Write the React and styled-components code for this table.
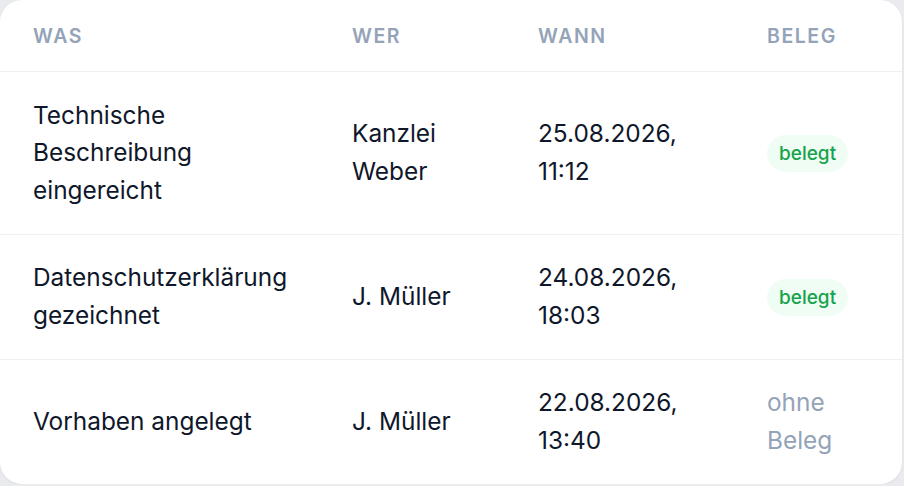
import React from 'react';
import styled, { createGlobalStyle } from 'styled-components';

const GlobalStyle = createGlobalStyle`
  html, body { margin: 0; padding: 0; }
  body {
    background: #e9ebef;
    font-family: Inter, "Noto Sans", "Liberation Sans", sans-serif;
    -webkit-font-smoothing: antialiased;
  }
`;

const Card = styled.div`
  width: 902px;
  background: #fff;
  border-radius: 22px;
  box-shadow: 0 1px 3px rgba(15, 23, 42, 0.06);
  overflow: hidden;
`;

const Row = styled.div`
  display: grid;
  grid-template-columns: 319px 186px 229px 1fr;
  align-items: center;
  padding: ${p => (p.$head ? '0 13px' : '24.5px 13px')};
  min-height: ${p => (p.$head ? '72px' : 'auto')};
  border-bottom: ${p => (p.$last ? 'none' : '1px solid #eef0f3')};
  box-sizing: border-box;
`;

const HeadCell = styled.div`
  padding: 0 20px;
  font-size: 19.5px;
  font-weight: 600;
  letter-spacing: 0.08em;
  text-transform: uppercase;
  color: #94a3b8;
`;

const Cell = styled.div`
  padding: 0 20px;
  font-size: 24.4px;
  line-height: 37.5px;
  color: ${p => (p.$muted ? '#94a3b8' : '#0f172a')};
`;

const Badge = styled.span`
  display: inline-block;
  padding: 0 12px;
  height: 37px;
  line-height: 37px;
  border-radius: 999px;
  background: #f0fdf4;
  color: #16a34a;
  font-size: 19px;
  font-weight: 500;
  vertical-align: middle;
`;

const entries = [
  { was: 'Technische Beschreibung eingereicht', wer: 'Kanzlei Weber', wann: '25.08.2026, 11:12', beleg: true },
  { was: 'Datenschutzerklärung gezeichnet', wer: 'J. Müller', wann: '24.08.2026, 18:03', beleg: true },
  { was: 'Vorhaben angelegt', wer: 'J. Müller', wann: '22.08.2026, 13:40', beleg: false },
];

export default function App() {
  return (
    <>
      <GlobalStyle />
      <Card>
        <Row $head>
          <HeadCell>Was</HeadCell>
          <HeadCell>Wer</HeadCell>
          <HeadCell>Wann</HeadCell>
          <HeadCell>Beleg</HeadCell>
        </Row>
        {entries.map((e, i) => (
          <Row key={i} $last={i === entries.length - 1}>
            <Cell>{e.was}</Cell>
            <Cell>{e.wer}</Cell>
            <Cell>{e.wann}</Cell>
            {e.beleg ? (
              <Cell><Badge>belegt</Badge></Cell>
            ) : (
              <Cell $muted>ohne Beleg</Cell>
            )}
          </Row>
        ))}
      </Card>
    </>
  );
}
